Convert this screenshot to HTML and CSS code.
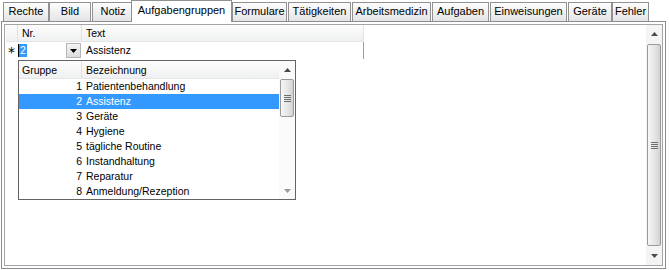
FILE: index.html
```html
<!DOCTYPE html>
<html>
  <head>
    <meta charset="utf-8">
    <title>Aufgabengruppen</title>
    <link rel="stylesheet" href="styles.css">
  </head>
  <body>
    <div class="window">
      <div class="tabs">
        <div class="tab t-rechte">Rechte</div>
        <div class="tab t-bild">Bild</div>
        <div class="tab t-notiz">Notiz</div>
        <div class="tab active t-gruppen">Aufgabengruppen</div>
        <div class="tab t-formulare">Formulare</div>
        <div class="tab t-taetig">Tätigkeiten</div>
        <div class="tab t-arbeit">Arbeitsmedizin</div>
        <div class="tab t-aufgaben">Aufgaben</div>
        <div class="tab t-einw">Einweisungen</div>
        <div class="tab t-geraete">Geräte</div>
        <div class="tab t-fehler">Fehler</div>
      </div>
      <div class="panel">
        <div class="panel-inner">
          <div class="grid-area">
            <div class="grid-head">
              <div class="cell c-ind"></div>
              <div class="cell c-nr">Nr.</div>
              <div class="cell c-text">Text</div>
            </div>
            <div class="grid-row">
              <div class="cell c-ind star"><span>*</span></div>
              <div class="cell c-nr combo">
                <span class="caret"></span><span class="sel">2</span>
                <span class="combo-btn">
                  <svg width="7" height="4" viewBox="0 0 7 4"><path d="M0 0h7L3.5 4z" fill="#000"/></svg>
                </span>
              </div>
              <div class="cell c-text">Assistenz</div>
            </div>

            <div class="lookup">
              <div class="lookup-list">
                <div class="lookup-head">
                  <div class="l-grp">Gruppe</div>
                  <div class="l-name">Bezeichnung</div>
                </div>
                <div class="lookup-row"><div class="l-num">1</div><div class="l-name">Patientenbehandlung</div></div>
                <div class="lookup-row selected"><div class="l-num">2</div><div class="l-name">Assistenz</div></div>
                <div class="lookup-row"><div class="l-num">3</div><div class="l-name">Geräte</div></div>
                <div class="lookup-row"><div class="l-num">4</div><div class="l-name">Hygiene</div></div>
                <div class="lookup-row"><div class="l-num">5</div><div class="l-name">tägliche Routine</div></div>
                <div class="lookup-row"><div class="l-num">6</div><div class="l-name">Instandhaltung</div></div>
                <div class="lookup-row"><div class="l-num">7</div><div class="l-name">Reparatur</div></div>
                <div class="lookup-row"><div class="l-num">8</div><div class="l-name">Anmeldung/Rezeption</div></div>
              </div>
              <div class="vscroll small">
                <div class="sb-btn up">
                  <svg width="7" height="4" viewBox="0 0 7 4"><path d="M0 4h7L3.5 0z" fill="#4a4a4a"/></svg>
                </div>
                <div class="sb-track">
                  <div class="sb-thumb small-thumb"><span class="grip"></span></div>
                </div>
                <div class="sb-btn down">
                  <svg width="7" height="4" viewBox="0 0 7 4"><path d="M0 0h7L3.5 4z" fill="#9a9a9a"/></svg>
                </div>
              </div>
            </div>
          </div>

          <div class="vscroll main">
            <div class="sb-btn up">
              <svg width="7" height="4" viewBox="0 0 7 4"><path d="M0 4h7L3.5 0z" fill="#4a4a4a"/></svg>
            </div>
            <div class="sb-track">
              <div class="sb-thumb main-thumb"><span class="grip"></span></div>
            </div>
            <div class="sb-btn down">
              <svg width="7" height="4" viewBox="0 0 7 4"><path d="M0 0h7L3.5 4z" fill="#4a4a4a"/></svg>
            </div>
          </div>
        </div>
      </div>
    </div>
  </body>
</html>
```

FILE: styles.css
```css
* {
  box-sizing: border-box;
}
body {
  margin: 0;
  font-family: "Liberation Sans", Arial, sans-serif;
  font-size: 10.5px;
  color: #000;
  background: #fff;
}
.window {
  width: 669px;
  height: 270px;
}

/* tab strip */
.tabs {
  display: flex;
  align-items: flex-end;
  height: 21px;
  position: relative;
  z-index: 2;
}
.tab {
  flex: none;
  min-width: 0;
  overflow: hidden;
  height: 19px;
  border: 1px solid #919191;
  border-bottom: none;
  background: linear-gradient(#fdfdfd, #e4e4e4);
  text-align: center;
  line-height: 17px;
  white-space: nowrap;
  font-size: 11px;
}
.tab.active {
  height: 22px;
  margin-bottom: -1px;
  background: #fff;
  line-height: 19px;
  position: relative;
  z-index: 3;
}
.t-rechte { margin-left: 3px; width: 46px; }
.t-bild { width: 42px; }
.t-notiz { margin-left: 1px; width: 42px; }
.t-gruppen { margin-left: -3px; width: 101px; }
.t-formulare { width: 55px; }
.t-taetig { margin-left: 1px; width: 63px; }
.t-arbeit { margin-left: 1px; width: 79px; }
.t-aufgaben { margin-left: 1px; width: 57px; }
.t-einw { margin-left: 1px; width: 77px; }
.t-geraete { margin-left: 1px; width: 44px; }
.t-fehler { width: 37px; }

/* page panel */
.panel {
  margin-left: 1px;
  width: 665px;
  height: 248px;
  border: 1px solid #898c94;
  padding: 2px;
  background: #fff;
}
.panel-inner {
  height: 100%;
  border: 1px solid #a4a4a4;
  display: flex;
}
.grid-area {
  flex: 1;
  position: relative;
  padding-left: 1px;
}

/* grid */
.grid-head,
.grid-row {
  display: flex;
}
.grid-head {
  height: 17px;
  background: linear-gradient(#fcfcfc, #eff0f1);
  border-bottom: 1px solid #e3e4e6;
  width: 358px;
}
.grid-head .cell {
  border-right: 1px solid #e2e2e2;
  line-height: 16px;
}
.cell {
  flex: none;
  white-space: nowrap;
}
.c-ind { width: 12px; }
.c-nr { width: 64px; padding-left: 4px; }
.c-text { width: 282px; padding-left: 4px; }
.grid-row {
  height: 17px;
  line-height: 17px;
}
.grid-row .c-text {
  border-right: 1px solid #a0a0a0;
}
.star {
  padding-left: 2px;
  font-size: 14px;
  font-family: "DejaVu Sans", sans-serif;
}
.star span {
  position: relative;
  top: 2px;
}
.combo {
  position: relative;
  padding-left: 0;
}
.caret {
  display: inline-block;
  width: 1px;
  height: 13px;
  background: #000;
  vertical-align: -3px;
}
.sel {
  display: inline-block;
  background: #3399ff;
  color: #fff;
  padding: 0 1px;
  line-height: 13px;
}
.combo-btn {
  position: absolute;
  left: 48px;
  top: 1px;
  width: 15px;
  height: 15px;
  border: 1px solid #b5b5b5;
  background: linear-gradient(#f4f4f4, #dcdcdc);
  display: flex;
  align-items: center;
  justify-content: center;
}

/* lookup dropdown */
.lookup {
  position: absolute;
  left: 13px;
  top: 35px;
  width: 278px;
  height: 140px;
  border: 1px solid #646464;
  background: #fff;
  display: flex;
  z-index: 5;
}
.lookup-list {
  flex: 1;
}
.lookup-head {
  display: flex;
  height: 18px;
  line-height: 18px;
  background: linear-gradient(#fdfdfd, #eff0f1);
  border-bottom: 1px solid #e6e6e6;
}
.l-grp {
  width: 63px;
  padding-left: 3px;
  border-right: 1px solid #e2e2e2;
}
.l-name {
  padding-left: 4px;
  white-space: nowrap;
}
.lookup-row {
  display: flex;
  height: 15px;
  line-height: 15px;
}
.l-num {
  width: 63px;
  text-align: right;
}
.lookup-row.selected {
  background: #3399ff;
  color: #fff;
}

/* scrollbars */
.vscroll {
  width: 16px;
  display: flex;
  flex-direction: column;
  background: #f4f4f4;
}
.vscroll.small {
  background: #fafafa;
}
.sb-btn {
  height: 18px;
  display: flex;
  align-items: center;
  justify-content: center;
}
.vscroll.small .sb-btn {
  height: 17px;
}
.sb-track {
  flex: 1;
  display: flex;
  flex-direction: column;
  padding: 1px 0;
}
.sb-thumb {
  margin: 0 1px;
  border: 1px solid #9a9a9a;
  border-radius: 2px;
  background: linear-gradient(90deg, #f6f6f6, #e4e4e4 60%, #d2d2d2);
  display: flex;
  align-items: center;
  justify-content: center;
}
.main-thumb {
  flex: 1;
}
.small-thumb {
  height: 38px;
}
.grip {
  width: 7px;
  height: 7px;
  background: repeating-linear-gradient(#6e6e6e 0 1px, transparent 1px 2px);
}
```
